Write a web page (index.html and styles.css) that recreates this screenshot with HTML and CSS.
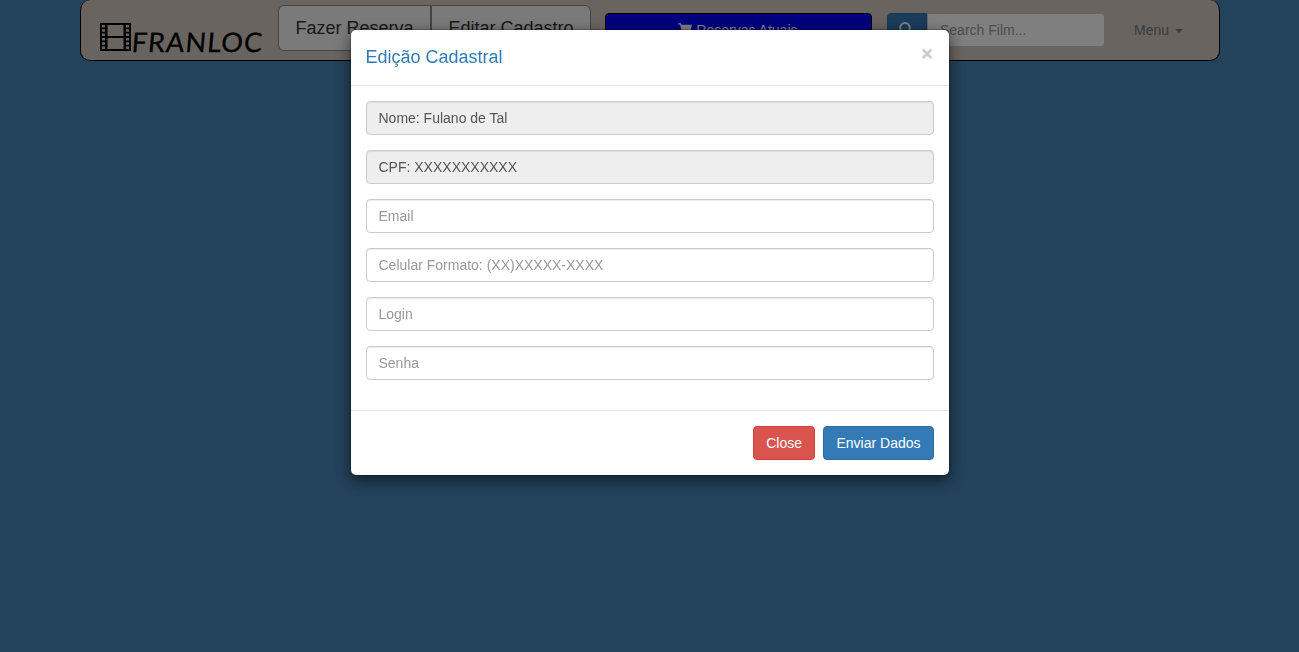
FILE: index.html
```html
<!DOCTYPE html>
<html lang="pt-BR">
<head>
<meta charset="utf-8">
<title>Franloc</title>
<link rel="stylesheet" href="styles.css">
</head>
<body>
<nav class="navbar">
  <a class="brand">
    <svg class="film" width="31" height="28" viewBox="0 0 31 28">
      <path fill="#000" fill-rule="evenodd" d="M0 0H31V28H0ZM7.500 2V13H23.500V2ZM7.500 15V26H23.500V15ZM2 2V4.500H5V2ZM2 6.300V8.800H5V6.300ZM2 10.600V13.100H5V10.600ZM2 14.900V17.400H5V14.900ZM2 19.200V21.700H5V19.200ZM2 23.500V26H5V23.500ZM26 2V4.500H29V2ZM26 6.300V8.800H29V6.300ZM26 10.600V13.100H29V10.600ZM26 14.900V17.400H29V14.900ZM26 19.200V21.700H29V19.200ZM26 23.500V26H29V23.500Z"/>
    </svg>
    <span class="brand-name">FRANLOC</span>
  </a>
  <div class="btn-group">
    <button class="btn-lg">Fazer Reserva</button><button class="btn-lg">Editar Cadastro</button>
  </div>
  <button class="btn btn-cart">
    <svg width="14" height="14" viewBox="0 0 14 14"><path fill="#fff" d="M0 .2H2.800L3.500 1.800H14L12.300 8H5.200L5.500 9.300H12.500V10.500H4.400L2 1.400H0Z"/><circle cx="5.500" cy="12.300" r="1.300" fill="#fff"/><circle cx="11" cy="12.300" r="1.300" fill="#fff"/></svg>
    Reservas Atuais
  </button>
  <div class="search">
    <button class="btn btn-primary search-btn"><svg width="14" height="14" viewBox="0 0 14 14"><circle cx="6" cy="5.800" r="4.800" fill="none" stroke="#fff" stroke-width="2"/><path d="M9.500 9.500L13 13" stroke="#fff" stroke-width="2.400"/></svg></button>
    <input class="search-input" placeholder="Search Film...">
  </div>
  <a class="menu">Menu <span class="caret"></span></a>
</nav>
<div class="backdrop">
  <div class="modal">
    <div class="modal-header"><h4>Edição Cadastral</h4><span class="close">×</span></div>
    <div class="modal-body">
      <input class="field" value="Nome: Fulano de Tal" disabled>
      <input class="field" value="CPF: XXXXXXXXXXX" disabled>
      <input class="field" placeholder="Email">
      <input class="field" placeholder="Celular Formato: (XX)XXXXX-XXXX">
      <input class="field" placeholder="Login">
      <input class="field" placeholder="Senha">
    </div>
    <div class="modal-footer">
      <button class="btn btn-danger">Close</button>
      <button class="btn btn-primary">Enviar Dados</button>
    </div>
  </div>
</div>
</body>
</html>
```
FILE: styles.css
```css
* { box-sizing: border-box; }
html, body { height: 100%; }
body {
  margin: 0;
  overflow: hidden;
  background: #4785b7;
  font: 14px/20px "Liberation Sans", Arial, sans-serif;
  color: #333;
}
button, input { font: inherit; margin: 0; }
.navbar {
  display: flex;
  align-items: flex-start;
  width: 1140px;
  height: 61px;
  margin: 0 auto 0 80px;
  padding-left: 19px;
  background: #d3c9c1;
  border: 1px solid #000;
  border-top-width: 0;
  border-radius: 10px;
}
.brand { display: flex; width: 178px; padding-top: 23px; color: #000; }
.film { flex: none; }
.brand-name {
  margin-left: 1px;
  padding-top: 4px;
  font: 27px/30px Lato, sans-serif;
  letter-spacing: 1.1px;
  -webkit-text-stroke: .3px #000;
  transform: skewX(-5deg);
}
.btn-group { display: flex; padding-top: 5px; }
.btn-lg {
  width: 153px;
  height: 46px;
  padding: 9px 0 10px;
  font-size: 18px;
  line-height: 24px;
  color: #333;
  background: #f5f5f5;
  border: 1px solid #888;
  border-radius: 6px 0 0 6px;
  white-space: nowrap;
}
.btn-lg + .btn-lg { width: 160px; border-radius: 0 6px 6px 0; }
.btn {
  height: 34px;
  padding: 6px 12px;
  border: 1px solid transparent;
  border-radius: 4px;
  color: #fff;
  white-space: nowrap;
}
.btn svg { vertical-align: -2px; }
.btn-cart { width: 267px; margin: 13px 15px 0 14px; padding: 6px 13px 6px 12px; background: #00f; border-color: #000; }
.btn-primary { background: #337ab7; border-color: #2e6da4; }
.btn-danger { background: #d9534f; border-color: #d43f3a; }
.search { display: flex; padding-top: 13px; }
.search-btn { width: 40px; padding: 5px 10px 7px 8px; border-radius: 4px 0 0 4px; }
.search-input {
  width: 178px;
  height: 34px;
  padding: 6px 12px;
  border: 1px solid #ccc;
  border-radius: 0 4px 4px 0;
  background: #fff;
}
.search-input::placeholder { color: #999; }
.menu { margin-left: 29px; padding-top: 20px; color: #777; }
.caret {
  display: inline-block;
  margin-left: 2px;
  vertical-align: middle;
  border-top: 4px solid;
  border-left: 4px solid transparent;
  border-right: 4px solid transparent;
}
.backdrop {
  position: fixed;
  inset: 0;
  padding-top: 29px;
  background: rgba(0, 0, 0, .5);
}
.modal {
  width: 600px;
  margin: 0 auto;
  background: #fff;
  background-clip: padding-box;
  border: 1px solid rgba(0, 0, 0, .2);
  border-radius: 6px;
  box-shadow: 0 5px 15px rgba(0, 0, 0, .5);
}
.modal-header {
  display: flex;
  justify-content: space-between;
  height: 56px;
  padding: 15px;
  border-bottom: 1px solid #e5e5e5;
}
h4 { margin: 0; font-size: 18px; line-height: 24px; font-weight: 500; color: #337ab7; }
.close { padding-right: 1px; font-size: 19px; line-height: 18px; font-weight: 700; color: #ccc; -webkit-text-stroke: .6px #ccc; }
.modal-body { display: grid; gap: 15px; padding: 15px 15px 30px; }
.field {
  width: 100%;
  height: 34px;
  padding: 6px 12px;
  color: #555;
  background: #fff;
  border: 1px solid #ccc;
  border-radius: 4px;
  box-shadow: inset 0 1px 1px rgba(0, 0, 0, .075);
}
.field:disabled { background: #eee; }
.field::placeholder { color: #999; }
.modal-footer {
  display: flex;
  justify-content: flex-end;
  gap: 8.500px;
  padding: 15px;
  border-top: 1px solid #e5e5e5;
}
```
